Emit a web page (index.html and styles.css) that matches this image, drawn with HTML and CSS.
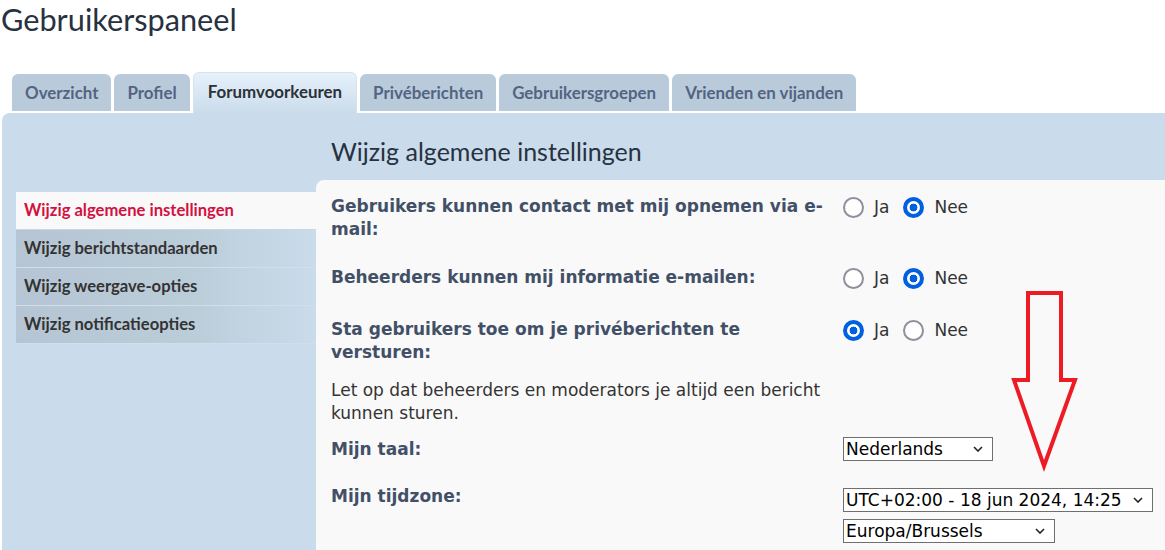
FILE: index.html
```html
<!DOCTYPE html>
<html lang="nl">
<head>
<meta charset="utf-8">
<title>Gebruikerspaneel</title>
<link rel="stylesheet" href="styles.css">
</head>
<body>
<h1 class="page-title">Gebruikerspaneel</h1>
<nav class="tabs">
  <a class="tab">Overzicht</a>
  <a class="tab">Profiel</a>
  <a class="tab active">Forumvoorkeuren</a>
  <a class="tab">Privéberichten</a>
  <a class="tab">Gebruikersgroepen</a>
  <a class="tab">Vrienden en vijanden</a>
</nav>
<div class="panel">
  <ul class="menu">
    <li class="menu-item current">Wijzig algemene instellingen</li>
    <li class="menu-item">Wijzig berichtstandaarden</li>
    <li class="menu-item">Wijzig weergave-opties</li>
    <li class="menu-item">Wijzig notificatieopties</li>
  </ul>
  <div class="main">
    <h2 class="main-title">Wijzig algemene instellingen</h2>
    <div class="content">
      <div class="row r1">
        <div class="label">Gebruikers kunnen contact met mij opnemen via e-mail:</div>
        <div class="field">
          <label class="opt"><input type="radio" name="a" class="radio"> Ja</label>
          <label class="opt"><input type="radio" name="a" class="radio" checked> Nee</label>
        </div>
      </div>
      <div class="row r2">
        <div class="label">Beheerders kunnen mij informatie e-mailen:</div>
        <div class="field">
          <label class="opt"><input type="radio" name="b" class="radio"> Ja</label>
          <label class="opt"><input type="radio" name="b" class="radio" checked> Nee</label>
        </div>
      </div>
      <div class="row r3">
        <div class="label">Sta gebruikers toe om je privéberichten te versturen:
          <p class="note">Let op dat beheerders en moderators je altijd een bericht kunnen sturen.</p>
        </div>
        <div class="field">
          <label class="opt"><input type="radio" name="c" class="radio" checked> Ja</label>
          <label class="opt"><input type="radio" name="c" class="radio"> Nee</label>
        </div>
      </div>
      <div class="row r4">
        <div class="label">Mijn taal:</div>
        <div class="field">
          <span class="select s-lang"><span class="select-text">Nederlands</span><svg class="chev" width="10" height="6" viewBox="0 0 10 6"><path d="M1 1 L5 5 L9 1" fill="none" stroke="#222" stroke-width="1.6"/></svg></span>
        </div>
      </div>
      <div class="row r5">
        <div class="label">Mijn tijdzone:</div>
        <div class="field stack">
          <span class="select s-time"><span class="select-text">UTC+02:00 - 18 jun 2024, 14:25</span><svg class="chev" width="10" height="6" viewBox="0 0 10 6"><path d="M1 1 L5 5 L9 1" fill="none" stroke="#222" stroke-width="1.6"/></svg></span>
          <span class="select s-zone"><span class="select-text">Europa/Brussels</span><svg class="chev" width="10" height="6" viewBox="0 0 10 6"><path d="M1 1 L5 5 L9 1" fill="none" stroke="#222" stroke-width="1.6"/></svg></span>
        </div>
      </div>
    </div>
  </div>
</div>
<svg class="arrow" width="80" height="190" viewBox="1005 285 80 190">
  <path d="M1028 293 L1061 293 L1061 380 L1075 380 L1044 466 L1014 380 L1028 380 Z" fill="none" stroke="#ed1c24" stroke-width="4" stroke-linejoin="miter"/>
</svg>
</body>
</html>
```

FILE: styles.css
```css
html, body {
  margin: 0;
  padding: 0;
  background: #ffffff;
  overflow: hidden;
}
body {
  width: 1165px;
  height: 550px;
  position: relative;
  font-family: "DejaVu Sans", Verdana, sans-serif;
}
.page-title {
  margin: 0;
  padding: 2px 0 0 1px;
  height: 42px;
  font-family: Lato, "Open Sans", sans-serif;
  font-weight: 400;
  font-size: 30.7px;
  line-height: 36px;
  color: #28313f;
}
.tabs {
  display: flex;
  align-items: flex-end;
  gap: 3px;
  padding-left: 12px;
  margin-top: 28px;
  height: 40px;
}
.tab {
  display: block;
  box-sizing: border-box;
  height: 37px;
  margin-bottom: 1px;
  padding: 0 13px;
  background: #b9cbda;
  border-radius: 6px 6px 0 0;
  font-family: Lato, "Open Sans", sans-serif;
  font-weight: 700;
  font-size: 16.9px;
  line-height: 38px;
  color: #536482;
}
.tab.active {
  height: 41px;
  margin-bottom: -1px;
  padding: 0 14px;
  background: linear-gradient(to bottom, #e6f1fb 0%, #cadceb 100%);
  border: 1px solid #d6e4ef;
  border-bottom: none;
  line-height: 38px;
  color: #2d3038;
}
.panel {
  margin: 1px 0 0 2px;
  background: #cadceb;
  border-radius: 8px 0 0 0;
  display: grid;
  grid-template-columns: 314px 1fr;
  height: 460px;
}
.menu {
  list-style: none;
  margin: 79px 0 0 0;
  padding: 0 0 0 14px;
}
.menu-item {
  box-sizing: border-box;
  height: 38px;
  padding-left: 8px;
  font-family: Lato, "Open Sans", sans-serif;
  font-weight: 700;
  font-size: 16.6px;
  line-height: 37px;
  color: #333333;
  background: linear-gradient(to right, #b5c5d3 0%, #bccdda 60%, #cadceb 100%);
  border-bottom: 1px solid #d2dfea;
}
.menu-item.current {
  background: #f9f9f9;
  color: #d31141;
  border-bottom: 1px solid #c9d7e3;
}
.main {
  display: flex;
  flex-direction: column;
}
.main-title {
  margin: 0;
  box-sizing: border-box;
  height: 67px;
  padding: 22px 0 0 15px;
  font-family: Lato, "Open Sans", sans-serif;
  font-weight: 400;
  font-size: 25px;
  line-height: 32px;
  color: #28313f;
}
.content {
  flex: 1;
  background: #f9f9f9;
  border-radius: 8px 0 0 0;
  padding: 15px 0 0 15px;
}
.row {
  display: grid;
  grid-template-columns: 512px 1fr;
}
.r2 { margin-top: 25px; }
.r3 { margin-top: 27px; }
.r4 { margin-top: 13px; }
.r5 { margin-top: 24px; }
.label {
  padding-right: 14px;
  font-weight: 700;
  font-size: 17px;
  line-height: 23px;
  color: #425067;
}
.note {
  margin: 15px 0 0 0;
  font-weight: 400;
  color: #333333;
}
.field {
  display: flex;
  align-items: flex-start;
  gap: 14px;
  font-size: 17px;
  line-height: 23px;
  color: #333333;
}
.field.stack {
  flex-direction: column;
  gap: 7px;
  padding-top: 3px;
}
.opt {
  display: flex;
  align-items: center;
  gap: 10px;
  height: 25px;
}
.radio {
  appearance: none;
  -webkit-appearance: none;
  margin: 0;
  width: 21px;
  height: 21px;
  box-sizing: border-box;
  border: 2px solid #8f8f9d;
  border-radius: 50%;
  background: #ffffff;
}
.radio:checked {
  border: 4px solid #0060df;
  background: radial-gradient(circle, #0060df 0 3.6px, #ffffff 4.2px);
}
.select {
  position: relative;
  display: flex;
  align-items: center;
  box-sizing: border-box;
  height: 24px;
  border: 1px solid #6f6f6f;
  background: #ffffff;
  padding-left: 2px;
  font-size: 17px;
  color: #000000;
}
.s-lang { width: 150px; margin-top: -1px; }
.s-time { width: 310px; }
.s-zone { width: 212px; }
.select-text {
  flex: 1;
  white-space: nowrap;
  line-height: 22px;
}
.chev {
  margin-right: 9px;
  flex: none;
}
.arrow {
  position: absolute;
  left: 1005px;
  top: 285px;
}
```
